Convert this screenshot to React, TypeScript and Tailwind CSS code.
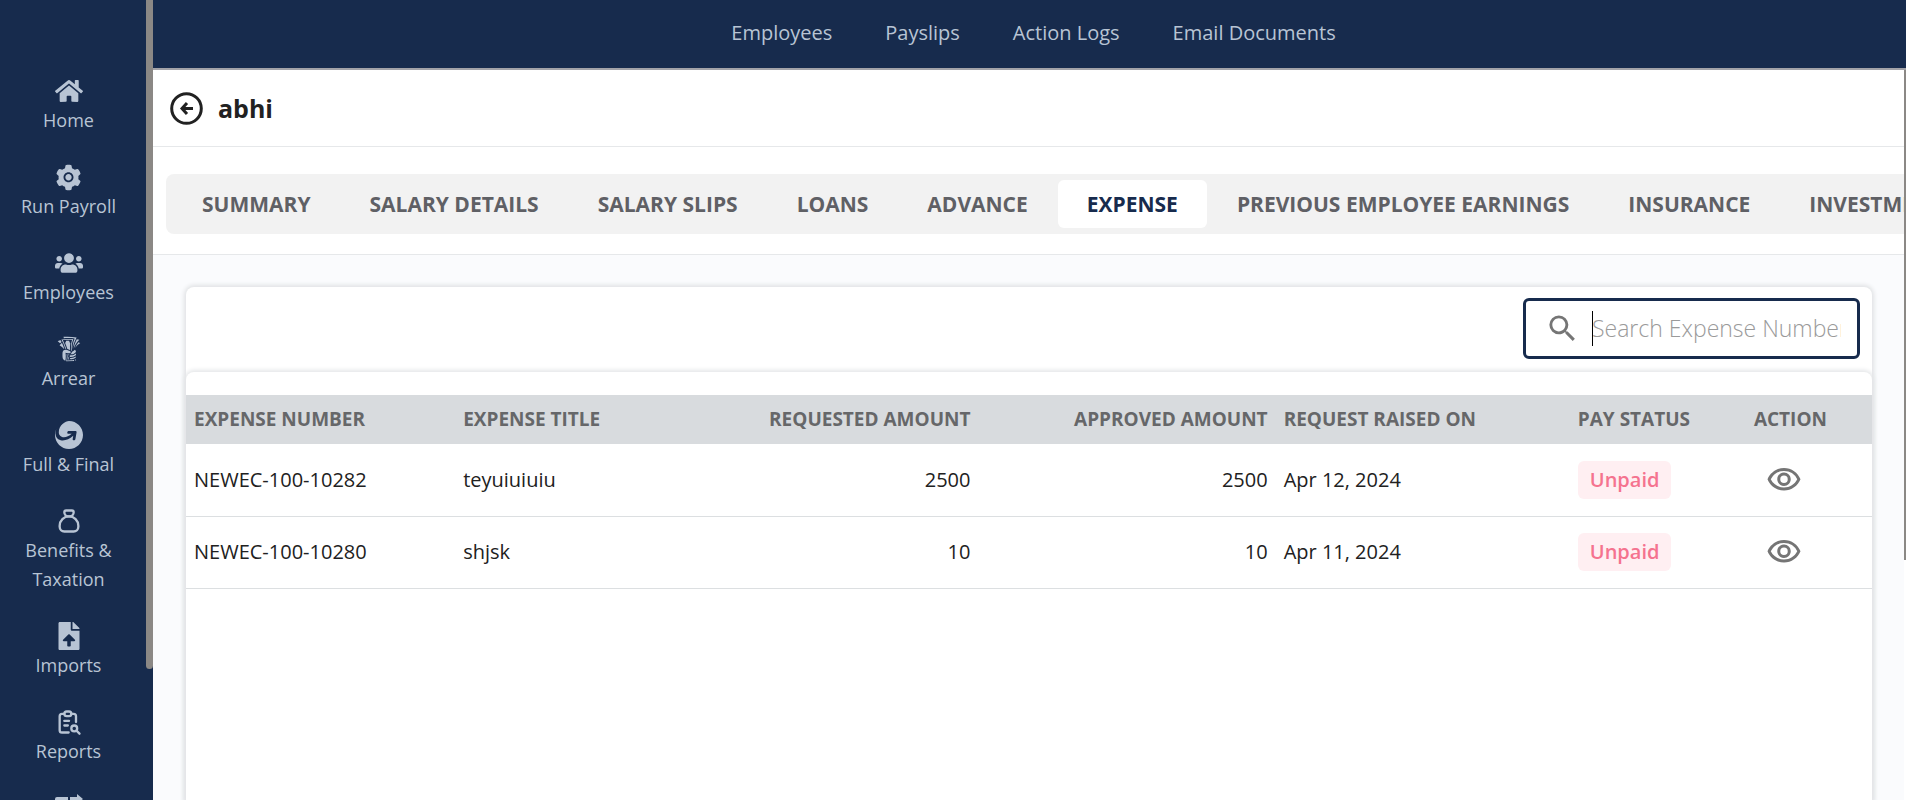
import type { ReactNode } from "react";
import { AiFillSetting } from "react-icons/ai";
import { FaFileUpload, FaHome, FaUsers } from "react-icons/fa";
import { GiTakeMyMoney } from "react-icons/gi";
import { MdOutlineVisibility, MdSearch } from "react-icons/md";
import { SiMoneygram } from "react-icons/si";
import { TbMoneybag, TbReportSearch } from "react-icons/tb";

type NavItem = { label: string; icon: ReactNode };

const sideNav: NavItem[] = [
  { label: "Home", icon: <FaHome size={28} /> },
  { label: "Run Payroll", icon: <AiFillSetting size={29} /> },
  { label: "Employees", icon: <FaUsers size={28} /> },
  { label: "Arrear", icon: <GiTakeMyMoney size={28} /> },
  { label: "Full & Final", icon: <SiMoneygram size={28} /> },
  { label: "Benefits & Taxation", icon: <TbMoneybag size={28} /> },
  { label: "Imports", icon: <FaFileUpload size={28} /> },
  { label: "Reports", icon: <TbReportSearch size={28} /> },
];

const topNav = ["Employees", "Payslips", "Action Logs", "Email Documents"];

const tabs = [
  "Summary",
  "Salary Details",
  "Salary Slips",
  "Loans",
  "Advance",
  "Expense",
  "Previous Employee Earnings",
  "Insurance",
  "Investments",
];

const expenses = [
  { number: "NEWEC-100-10282", title: "teyuiuiuiu", requested: 2500, approved: 2500, raisedOn: "Apr 12, 2024", status: "Unpaid" },
  { number: "NEWEC-100-10280", title: "shjsk", requested: 10, approved: 10, raisedOn: "Apr 11, 2024", status: "Unpaid" },
];

function BackIcon() {
  return (
    <svg width="33" height="33" viewBox="0 0 33 33" fill="none" stroke="currentColor" strokeWidth="3">
      <circle cx="16.5" cy="16.5" r="14.8" />
      <path d="M17 11l-5 5.5 5 5.5M12.5 16.5H23" />
    </svg>
  );
}

function TransferIcon() {
  return (
    <svg width="28" height="28" viewBox="0 0 28 28" fill="currentColor">
      <path d="M2 3h11v9H0V5a2 2 0 0 1 2-2zM15 3h7V0l6 5-6 5V7h-7z" />
      <path d="M0 15h13v9H2a2 2 0 0 1-2-2zM15 15h12v7a2 2 0 0 1-2 2H15z" />
    </svg>
  );
}

function Sidebar() {
  return (
    <aside className="flex w-[153px] shrink-0 overflow-hidden bg-[#172b4d]">
      <nav
        aria-label="Main"
        className="flex flex-1 flex-col gap-7 pt-[77px] pr-[9px] text-[18px] leading-[29px] text-[#b8c4d4]"
      >
        {sideNav.map((item) => (
          <a key={item.label} href="#" className="flex shrink-0 flex-col items-center px-3 text-center">
            <span className="flex h-[29px] items-start">{item.icon}</span>
            {item.label}
          </a>
        ))}
        <a href="#" aria-label="Transfers" className="flex shrink-0 justify-center">
          <TransferIcon />
        </a>
      </nav>
      {/* scroll thumb */}
      <div className="h-[669px] w-[7px] shrink-0 rounded-b-sm bg-[#8b8885]" />
    </aside>
  );
}

function TopBar() {
  return (
    <header className="flex h-[68px] shrink-0 items-center justify-center gap-[53px] bg-[#172b4d] pb-0.5 pl-2 text-[20px] text-[#b8c4d4]">
      {topNav.map((label) => (
        <a key={label} href="#">
          {label}
        </a>
      ))}
    </header>
  );
}

function Tabs() {
  return (
    <div className="overflow-hidden border-b border-[#e6e8ea] bg-white pt-[27px] pb-5 pl-[13px]">
      <div role="tablist" className="flex h-[60px] w-max items-center gap-px rounded-lg bg-[#f2f2f2] px-[7px]">
        {tabs.map((tab) => {
          const active = tab === "Expense";
          return (
            <button
              key={tab}
              role="tab"
              aria-selected={active}
              className={`h-12 rounded-md px-[29px] pt-0.5 text-[21px] font-bold uppercase ${
                active ? "bg-white text-[#172b4d]" : "text-[#5f6065]"
              }`}
            >
              {tab}
            </button>
          );
        })}
      </div>
    </div>
  );
}

function SearchBox() {
  return (
    <label className="flex h-[61px] w-[337px] items-center gap-3 rounded-md border-[3px] border-[#172b4d] pr-4 pl-[19px]">
      <MdSearch size={35} className="shrink-0 text-[#757575]" />
      <span className="relative flex min-w-0 flex-1">
        <input
          aria-label="Search expense number"
          placeholder="Search Expense Number"
          className="w-full min-w-0 text-[23px] font-light caret-transparent outline-none placeholder:text-[#9a9a9a]"
        />
        <span aria-hidden className="absolute inset-y-0 left-0 w-px bg-black" />
      </span>
    </label>
  );
}

function ExpenseTable() {
  return (
    <table className="w-full table-fixed text-[20px] text-[#212121]">
      <colgroup>
        <col className="w-[269px]" />
        <col className="w-[269px]" />
        <col className="w-[254px]" />
        <col className="w-[297px]" />
        <col className="w-[294px]" />
        <col className="w-[176px]" />
        <col className="w-[126px]" />
      </colgroup>
      <thead className="bg-[#d8dbde] text-[19px] text-[#666769] uppercase">
        <tr className="h-[49px]">
          <th className="px-2 text-left">Expense Number</th>
          <th className="px-2 text-left">Expense Title</th>
          <th className="px-2 text-right">Requested Amount</th>
          <th className="px-2 text-right">Approved Amount</th>
          <th className="px-2 text-left">Request Raised On</th>
          <th className="px-2 text-left">Pay Status</th>
          <th className="px-2 text-left">Action</th>
        </tr>
      </thead>
      <tbody>
        {expenses.map((row) => (
          <tr key={row.number} className="h-[72px] border-b border-[#dcdfe1]">
            <td className="px-2">{row.number}</td>
            <td className="px-2">{row.title}</td>
            <td className="px-2 text-right">{row.requested}</td>
            <td className="px-2 text-right">{row.approved}</td>
            <td className="px-2">{row.raisedOn}</td>
            <td className="px-2">
              <span className="inline-block rounded-md bg-[#ffeff2] px-3 py-1 font-semibold text-[#f5738f]">
                {row.status}
              </span>
            </td>
            <td className="px-2">
              <button aria-label={`View ${row.number}`} className="ml-3 block text-[#757575]">
                <MdOutlineVisibility size={36} />
              </button>
            </td>
          </tr>
        ))}
      </tbody>
    </table>
  );
}

export default function App() {
  return (
    <div className="flex h-screen overflow-hidden bg-white font-['Open_Sans','Noto_Sans',sans-serif]">
      <Sidebar />
      <div className="flex min-w-0 flex-1 flex-col">
        <TopBar />
        <div className="flex min-h-0 flex-1 border-t-2 border-[#a3a3a8]">
          <main className="flex min-w-0 flex-1 flex-col bg-[#fafbfd]">
            <div className="flex h-[77px] shrink-0 items-center gap-[15px] border-b border-[#e6e8ea] bg-white pl-[17px] text-[#212121]">
              <button aria-label="Back">
                <BackIcon />
              </button>
              <h1 className="pt-0.5 text-[25px] font-bold">abhi</h1>
            </div>
            <Tabs />
            <section className="mt-8 mr-8 ml-[33px] flex flex-1 flex-col rounded-t-lg bg-white shadow-[0_0_4px_2px_#e0e2e4]">
              <div className="flex justify-end px-3 pt-[11px] pb-[13px]">
                <SearchBox />
              </div>
              <div className="flex-1 rounded-t-lg pt-[23px] shadow-[0_0_4px_2px_#e4e6e8]">
                <ExpenseTable />
              </div>
            </section>
          </main>
          <div className="h-[490px] w-[2px] shrink-0 bg-[#8b8885]" />
        </div>
      </div>
    </div>
  );
}
